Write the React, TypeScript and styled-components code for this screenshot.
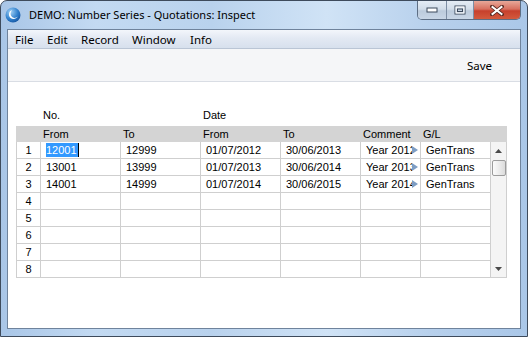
import React from "react";
import styled, { createGlobalStyle } from "styled-components";

const GlobalStyle = createGlobalStyle`
  html, body {
    margin: 0;
    padding: 0;
    background: #ffffff;
  }
  * {
    box-sizing: border-box;
  }
`;

const COLS = "24px 80px 80px 80px 80px 60px 70px 17px";

const Window = styled.div`
  width: 528px;
  height: 337px;
  display: flex;
  flex-direction: column;
  border: 1px solid #3e4b5c;
  border-radius: 7px 7px 0 0;
  overflow: hidden;
  background: linear-gradient(
    90deg,
    #a9c6e7 0%,
    #c3daf2 18%,
    #b9d2ed 40%,
    #d0e3f6 62%,
    #b7d0ec 82%,
    #aac7e8 100%
  );
`;

const TitleBar = styled.div`
  height: 28px;
  display: flex;
  align-items: flex-start;
  padding-left: 4px;
`;

const AppIcon = styled.div`
  width: 16px;
  height: 16px;
  margin-top: 6px;
  display: flex;
`;

const Title = styled.div`
  margin: 5px 0 0 8px;
  line-height: 17px;
  font-family: "Noto Sans", "Liberation Sans", sans-serif;
  font-size: 11px;
  color: #000;
  white-space: nowrap;
`;

const Caption = styled.div`
  margin-left: auto;
  margin-right: 6px;
  display: flex;
  height: 19px;
  border: 1px solid #5d6e84;
  border-top: none;
  border-radius: 0 0 5px 5px;
  overflow: hidden;
`;

const CaptionButton = styled.div<{ $w: number; $close?: boolean }>`
  width: ${(p) => p.$w}px;
  height: 100%;
  display: flex;
  align-items: center;
  justify-content: center;
  border-left: ${(p) => (p.$close ? "1px solid #6a4a48" : "none")};
  background: ${(p) =>
    p.$close
      ? "linear-gradient(#e8a899 0%, #d8705f 45%, #c7402c 55%, #d35a3d 100%)"
      : "linear-gradient(#e4ecf5 0%, #d2dde9 45%, #bccbdc 55%, #c8d6e6 100%)"};
  & + & {
    border-left: 1px solid #7d8ea4;
  }
`;

const Frame = styled.div`
  flex: 1;
  display: flex;
  padding: 0 6px 7px 6px;
`;

const Client = styled.div`
  flex: 1;
  display: flex;
  flex-direction: column;
  border: 1px solid #6f839c;
  background: #ffffff;
`;

const MenuBar = styled.div`
  height: 19px;
  display: flex;
  align-items: center;
  padding-left: 1px;
  border-bottom: 1px solid #bac5d5;
  background: linear-gradient(#f3f6fb 0%, #e3e9f3 45%, #d7e0ed 100%);
`;

const MenuItem = styled.div<{ $w: number }>`
  width: ${(p) => p.$w}px;
  padding-left: 6px;
  font-family: "Noto Sans", "Liberation Sans", sans-serif;
  font-size: 11.5px;
  color: #000;
`;

const Toolbar = styled.div`
  height: 33px;
  display: flex;
  align-items: center;
  justify-content: flex-end;
  padding-right: 28px;
  background: #f5f6f8;
  border-bottom: 1px solid #d9dde4;
`;

const ToolButton = styled.div`
  font-family: "Noto Sans", "Liberation Sans", sans-serif;
  font-size: 11.5px;
  color: #000;
`;

const Content = styled.div`
  flex: 1;
  padding: 25px 0 0 8px;
  font-family: "Liberation Sans", Arial, sans-serif;
  font-size: 11px;
  color: #000;
`;

const LabelRow = styled.div`
  display: grid;
  grid-template-columns: ${COLS};
  height: 17px;
  line-height: 17px;
  margin-bottom: 2px;
`;

const Label = styled.div`
  padding-left: 3px;
`;

const HeaderRow = styled.div`
  display: grid;
  grid-template-columns: ${COLS};
  width: 491px;
  height: 16px;
  line-height: 16px;
  background: #d4d4d4;
`;

const HeaderCell = styled.div`
  padding-left: 3px;
`;

const Body = styled.div`
  display: flex;
  width: 491px;
`;

const Rows = styled.div`
  display: flex;
  flex-direction: column;
`;

const Row = styled.div`
  display: grid;
  grid-template-columns: 24px 80px 80px 80px 80px 60px 70px;
  height: 17px;
`;

const Cell = styled.div<{ $center?: boolean }>`
  display: flex;
  align-items: center;
  justify-content: ${(p) => (p.$center ? "center" : "flex-start")};
  padding-left: ${(p) => (p.$center ? 0 : 5)}px;
  border-left: 1px solid #cfcfcf;
  border-bottom: 1px solid #cfcfcf;
  white-space: nowrap;
  overflow: hidden;
  line-height: 16px;
`;

const CommentText = styled.span`
  flex: 1;
  overflow: hidden;
  white-space: nowrap;
`;

const Pointer = styled.span`
  width: 7px;
  height: 16px;
  display: flex;
  align-items: center;
  margin-right: 1px;
`;

const Selected = styled.span`
  display: inline-block;
  background: #3399ff;
  color: #ffffff;
  line-height: 14px;
  padding: 0 1px 0 0;
  border-right: 1px solid #000;
`;

const ScrollBar = styled.div`
  width: 17px;
  display: flex;
  flex-direction: column;
  align-items: center;
  border-left: 1px solid #cfcfcf;
  border-right: 1px solid #cfcfcf;
  border-bottom: 1px solid #cfcfcf;
  background: #f4f4f4;
`;

const ScrollArrow = styled.div`
  height: 17px;
  display: flex;
  align-items: center;
  justify-content: center;
`;

const Thumb = styled.div`
  width: 14px;
  height: 16px;
  margin-top: 1px;
  border: 1px solid #9c9c9c;
  border-radius: 2px;
  background: linear-gradient(90deg, #fbfbfb 0%, #ececec 50%, #dcdcdc 100%);
`;

const Track = styled.div`
  flex: 1;
`;

const menus = [
  { label: "File", w: 32 },
  { label: "Edit", w: 34 },
  { label: "Record", w: 51 },
  { label: "Window", w: 58 },
  { label: "Info", w: 30 },
];

const rows = [
  ["12001", "12999", "01/07/2012", "30/06/2013", "Year 2012", "GenTrans"],
  ["13001", "13999", "01/07/2013", "30/06/2014", "Year 2013", "GenTrans"],
  ["14001", "14999", "01/07/2014", "30/06/2015", "Year 2014", "GenTrans"],
  [],
  [],
  [],
  [],
  [],
];

function Logo() {
  return (
    <svg width="16" height="16" viewBox="0 0 16 16">
      <defs>
        <radialGradient id="lg" cx="0.35" cy="0.3" r="0.8">
          <stop offset="0" stopColor="#9fd0f5" />
          <stop offset="0.6" stopColor="#2f7fcc" />
          <stop offset="1" stopColor="#14509a" />
        </radialGradient>
      </defs>
      <circle cx="8" cy="8" r="7.5" fill="url(#lg)" />
      <path
        d="M7 3.2 C3.6 4.2 3 8.8 5.6 11 C7.8 12.8 11.4 12.2 12.8 9.6 C11 11.2 8 11.4 6.6 9.6 C5 7.6 5.4 4.8 7 3.2 Z"
        fill="#ffffff"
      />
    </svg>
  );
}

function Arrow({ up }: { up?: boolean }) {
  return (
    <svg width="7" height="4" viewBox="0 0 7 4">
      <path d={up ? "M0 4 L3.5 0 L7 4 Z" : "M0 0 L7 0 L3.5 4 Z"} fill="#4a4a4a" />
    </svg>
  );
}

export default function App() {
  return (
    <>
      <GlobalStyle />
      <Window>
        <TitleBar>
          <AppIcon>
            <Logo />
          </AppIcon>
          <Title>DEMO: Number Series - Quotations: Inspect</Title>
          <Caption>
            <CaptionButton $w={28}>
              <svg width="12" height="6" viewBox="0 0 12 6">
                <rect x="1" y="1" width="10" height="4" fill="#fff" stroke="#3d4a5c" />
              </svg>
            </CaptionButton>
            <CaptionButton $w={27}>
              <svg width="12" height="10" viewBox="0 0 12 10">
                <rect x="1" y="1" width="10" height="8" fill="none" stroke="#3d4a5c" />
                <rect x="2" y="2" width="8" height="6" fill="none" stroke="#fff" />
                <rect x="3.5" y="4" width="5" height="2.5" fill="none" stroke="#3d4a5c" />
              </svg>
            </CaptionButton>
            <CaptionButton $w={47} $close>
              <svg width="14" height="11" viewBox="0 0 14 11">
                <path
                  d="M2 1.5 L12 9.5 M12 1.5 L2 9.5"
                  stroke="#5a2a22"
                  strokeWidth="3.6"
                  strokeLinecap="square"
                />
                <path
                  d="M2.5 2 L11.5 9 M11.5 2 L2.5 9"
                  stroke="#ffffff"
                  strokeWidth="2"
                  strokeLinecap="square"
                />
              </svg>
            </CaptionButton>
          </Caption>
        </TitleBar>
        <Frame>
          <Client>
            <MenuBar>
              {menus.map((m) => (
                <MenuItem key={m.label} $w={m.w}>
                  {m.label}
                </MenuItem>
              ))}
            </MenuBar>
            <Toolbar>
              <ToolButton>Save</ToolButton>
            </Toolbar>
            <Content>
              <LabelRow>
                <div />
                <Label>No.</Label>
                <div />
                <Label>Date</Label>
              </LabelRow>
              <HeaderRow>
                <HeaderCell />
                <HeaderCell>From</HeaderCell>
                <HeaderCell>To</HeaderCell>
                <HeaderCell>From</HeaderCell>
                <HeaderCell>To</HeaderCell>
                <HeaderCell>Comment</HeaderCell>
                <HeaderCell>G/L</HeaderCell>
                <HeaderCell />
              </HeaderRow>
              <Body>
                <Rows>
                  {rows.map((r, i) => (
                    <Row key={i}>
                      <Cell $center>{i + 1}</Cell>
                      <Cell>{i === 0 ? <Selected>{r[0]}</Selected> : r[0]}</Cell>
                      <Cell>{r[1]}</Cell>
                      <Cell>{r[2]}</Cell>
                      <Cell>{r[3]}</Cell>
                      <Cell>
                        <CommentText>{r[4]}</CommentText>
                        {r[4] && (
                          <Pointer>
                            <svg width="6" height="8" viewBox="0 0 6 8">
                              <path d="M0 0 L6 4 L0 8 Z" fill="#7d9dc4" />
                            </svg>
                          </Pointer>
                        )}
                      </Cell>
                      <Cell>{r[5]}</Cell>
                    </Row>
                  ))}
                </Rows>
                <ScrollBar>
                  <ScrollArrow>
                    <Arrow up />
                  </ScrollArrow>
                  <Thumb />
                  <Track />
                  <ScrollArrow>
                    <Arrow />
                  </ScrollArrow>
                </ScrollBar>
              </Body>
            </Content>
          </Client>
        </Frame>
      </Window>
    </>
  );
}
